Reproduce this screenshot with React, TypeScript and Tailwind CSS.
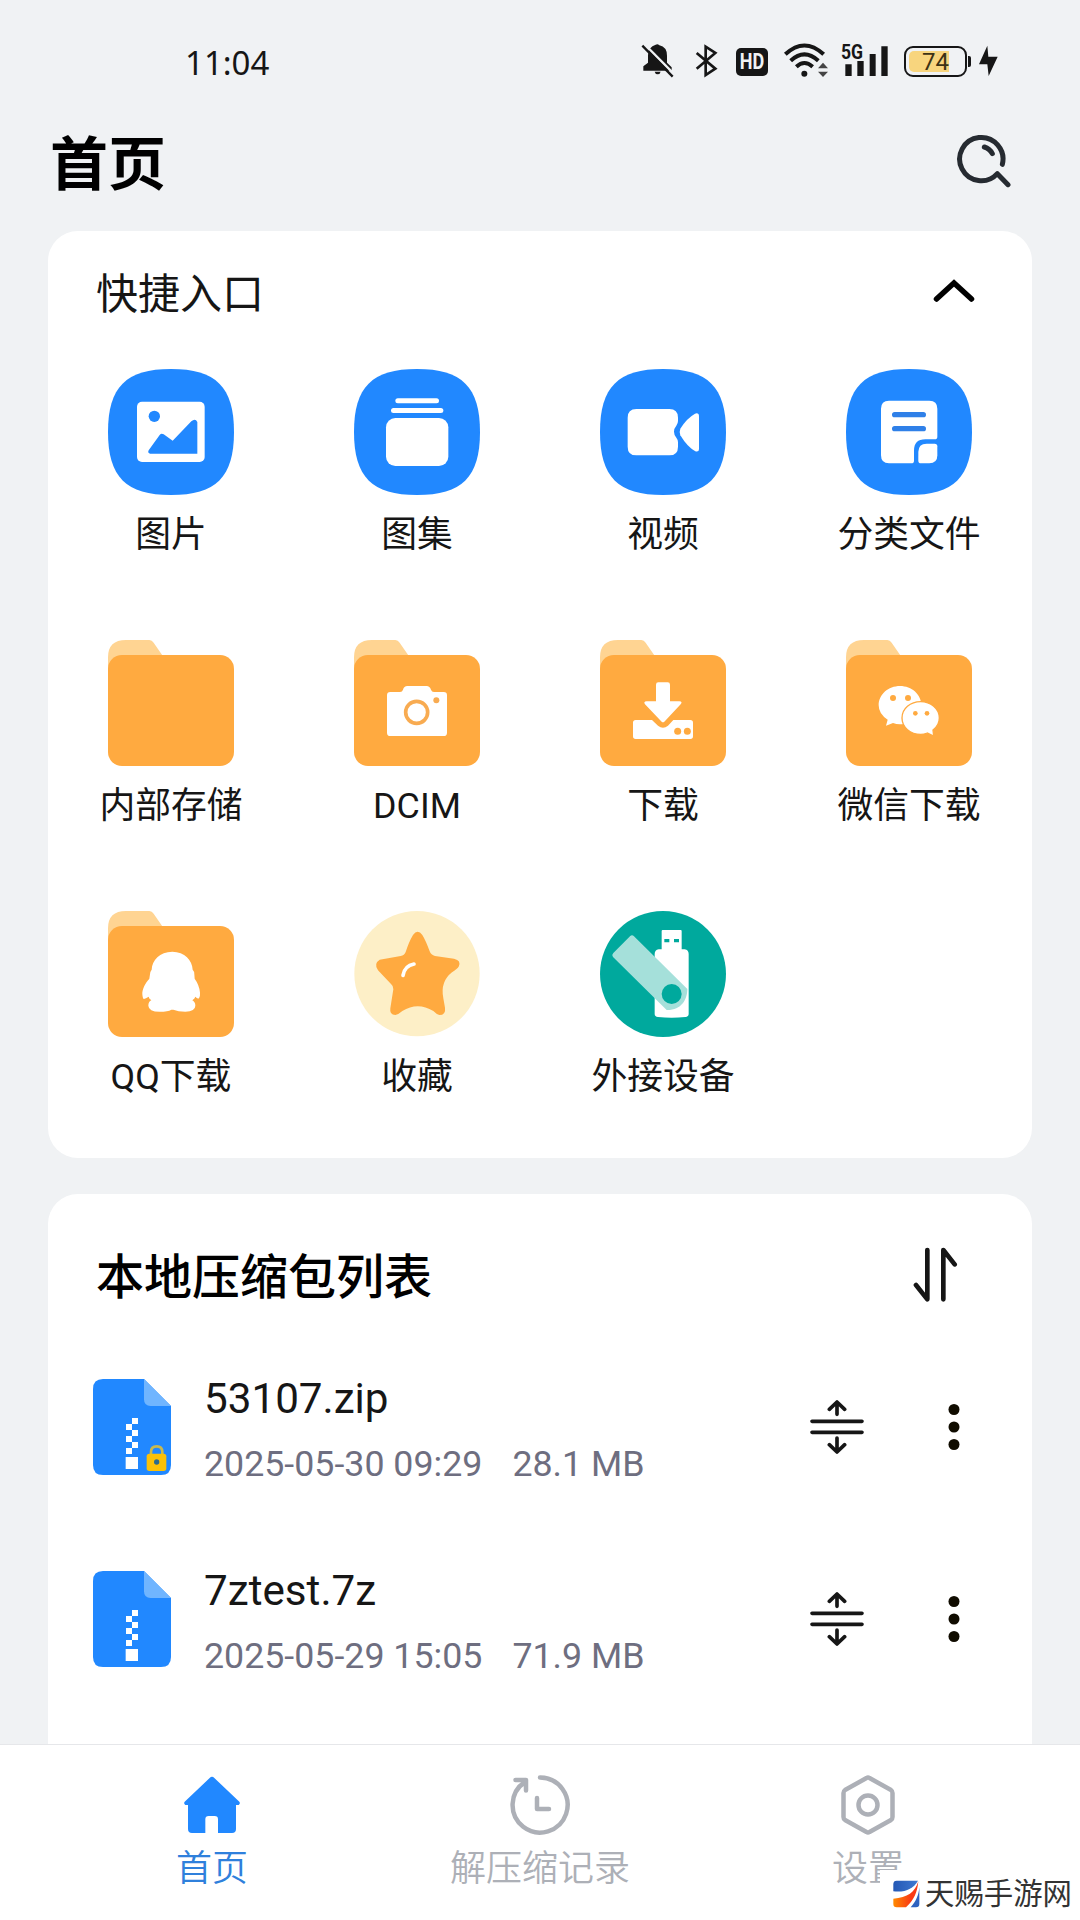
import type { ReactNode } from "react";

interface Shortcut {
  label: string;
  icon: ReactNode;
}

interface Archive {
  name: string;
  date: string;
  size: string;
  locked?: boolean;
}

function Squircle({ children }: { children: ReactNode }) {
  return (
    <svg viewBox="0 0 378 378" className="size-[126px]" fill="#fff">
      <path fill="#2188ff" d="M189 0C324 0 378 54 378 189S324 378 189 378 0 324 0 189 54 0 189 0Z" />
      {children}
    </svg>
  );
}

function Folder({ children }: { children?: ReactNode }) {
  return (
    <svg viewBox="0 0 378 378" className="size-[126px]" fill="#fff">
      <path fill="#ffd492" d="M0 100V52Q0 0 54 0H124Q132 0 137 8L166 50L120 100Z" />
      <rect y="45" width="378" height="333" rx="42" fill="#ffaa40" />
      {children}
    </svg>
  );
}

const shortcuts: Shortcut[] = [
  {
    label: "图片",
    icon: (
      <Squircle>
        <rect x="87" y="98" width="203" height="181" rx="15" />
        <circle cx="139" cy="142" r="17" fill="#2188ff" />
        <path fill="#2188ff" d="M122 244L155 198Q160 191 167 196L194 215L250 157Q262 147 268 159V254H126Q118 252 122 244Z" />
      </Squircle>
    ),
  },
  {
    label: "图集",
    icon: (
      <Squircle>
        <rect x="124" y="88" width="131" height="15" rx="7.5" />
        <rect x="111" y="117" width="157" height="15" rx="7.5" />
        <rect x="96" y="147" width="187" height="144" rx="28" />
      </Squircle>
    ),
  },
  {
    label: "视频",
    icon: (
      <Squircle>
        <path d="M109 120H208Q234 120 234 146V156Q234 163 229 170Q222 178 222 188Q222 198 229 206Q234 212 234 220V233Q234 259 208 259H109Q83 259 83 233V146Q83 120 109 120Z" />
        <path d="M297 143Q297 130 285 134Q260 148 241 179Q237 189 241 199Q262 234 286 247Q297 250 297 240Z" />
      </Squircle>
    ),
  },
  {
    label: "分类文件",
    icon: (
      <Squircle>
        <path d="M129 95H250Q274 95 274 119V203Q274 211 266 211H238Q204 211 204 245V275Q204 283 196 283H129Q105 283 105 259V119Q105 95 129 95Z" />
        <path d="M242 224H266Q274 224 274 232V259Q274 283 250 283H225Q217 283 217 275V249Q217 224 242 224Z" />
        <path stroke="#2f80e8" strokeWidth="16" strokeLinecap="round" d="M146 137H232M146 179H232" />
      </Squircle>
    ),
  },
  { label: "内部存储", icon: <Folder /> },
  {
    label: "DCIM",
    icon: (
      <Folder>
        <path d="M109 156H138Q145 156 147 149Q150 138 160 138H218Q227 138 231 149Q233 156 240 156H269Q279 156 279 166V278Q279 288 269 288H109Q99 288 99 278V166Q99 156 109 156Z" />
        <circle cx="188" cy="217" r="33" stroke="#f8ab51" strokeWidth="11" />
        <circle cx="247" cy="181" r="9" fill="#f8ab51" />
      </Folder>
    ),
  },
  {
    label: "下载",
    icon: (
      <Folder>
        <path d="M175 127H203Q210 127 210 134V184H238Q249 185 242 193L193 245Q189 249 185 245L135 193Q129 185 140 184H168V134Q168 127 175 127Z" />
        <path d="M107 240H156L174 257Q189 269 204 257L220 240H271Q279 240 279 248V289Q279 297 271 297H107Q99 297 99 289V248Q99 240 107 240Z" />
        <circle cx="233" cy="274" r="10.5" fill="#ffaa40" />
        <circle cx="262" cy="274" r="10.5" fill="#ffaa40" />
      </Folder>
    ),
  },
  {
    label: "微信下载",
    icon: (
      <Folder>
        <path d="M162 138C197 138 226 163 226 196S197 253 162 253Q151 253 141 249L120 257L125 239Q98 222 98 196C98 163 127 138 162 138Z" />
        <path stroke="#ffaa40" strokeWidth="4" d="M224 185C254 185 280 206 280 234Q280 256 261 270L263 288L244 279Q234 283 224 283C193 283 168 262 168 234S193 185 224 185Z" />
        <g fill="#ffaa40">
          <circle cx="141" cy="174" r="9" />
          <circle cx="186" cy="174" r="9" />
          <circle cx="208" cy="220" r="7" />
          <circle cx="243" cy="220" r="7" />
        </g>
      </Folder>
    ),
  },
  {
    label: "QQ下载",
    icon: (
      <Folder>
        <path d="M193 122C155 122 132 148 131 176Q125 184 126 190L124 203C112 215 102 236 103 250Q104 264 108 264Q113 263 122 257Q122 262 130 268Q121 272 121 284Q122 302 155 302Q180 302 190 296H196Q210 302 232 302Q262 300 262 284Q262 273 253 268Q261 262 262 257Q270 265 273 262Q277 255 276 245Q274 222 260 203L259 190Q260 182 254 176C253 148 230 122 193 122Z" />
      </Folder>
    ),
  },
  {
    label: "收藏",
    icon: (
      <svg viewBox="0 0 378 378" className="size-[126px]">
        <circle cx="189" cy="188" r="188" fill="#fdefc7" />
        <path fill="#ffaa40" d="M177 72Q191 53 205 72Q216 90 227 121Q231 132 243 135L300 143Q323 148 314 167Q309 174 294 184Q258 212 268 262L273 290Q276 312 256 312Q248 310 238 300Q191 272 145 300Q134 310 124 312Q106 312 109 292L118 235Q119 225 111 219L72 178Q58 158 77 146L140 135Q151 134 155 123Q165 92 177 72Z" />
        <path fill="none" stroke="#fff" strokeWidth="11" strokeLinecap="round" d="M147 193Q152 164 180 159" />
      </svg>
    ),
  },
  {
    label: "外接设备",
    icon: (
      <svg viewBox="0 0 378 378" className="size-[126px]" fill="#fff">
        <circle cx="189" cy="189" r="189" fill="#00a99d" />
        <path d="M188 57H242Q245 57 245 60V115H254Q266 117 266 129V309Q266 317 256 318Q215 323 174 318Q164 317 164 309V129Q164 117 176 115H185V60Q185 57 188 57Z" />
        <path fill="#00a99d" d="M193 84H208V94H193ZM222 84H237V94H222Z" />
        <path fill="#a5e0da" d="M90 76Q96 69 102 76L262 234C262 266 244 298 200 297L39 138Q34 132 40 126Z" />
        <circle cx="215" cy="249" r="30" fill="#00a99d" />
      </svg>
    ),
  },
];

const archives: Archive[] = [
  { name: "53107.zip", date: "2025-05-30 09:29", size: "28.1 MB", locked: true },
  { name: "7ztest.7z", date: "2025-05-29 15:05", size: "71.9 MB" },
];

function StatusBar() {
  return (
    <div className="flex h-[122px] items-start pr-[81px] pl-[185px] text-[#161616]">
      <span className="mt-[40px] font-['Noto_Sans',sans-serif] text-[33px] leading-[46px]">11:04</span>
      <div className="mt-[43px] ml-auto flex items-start">
        <svg viewBox="63 39 102 105" className="h-[35px] w-[34px]" fill="currentColor">
          <path d="M107 44Q113 40 118 46Q141 51 141 77V98L155 112V122H70V109L84 98V75Q85 51 107 44ZM104 125H122Q120 133 113 133T104 125Z" />
          <path stroke="#f0f2f4" strokeWidth="7" d="M73 42L164 134" />
          <path stroke="currentColor" strokeWidth="7" d="M67 47L158 140" />
        </svg>
        <svg viewBox="225 39 69 105" className="ml-[20px] h-[35px] w-[23px]" fill="none" stroke="currentColor" strokeWidth="8">
          <path d="M230 69L286 116L257 135V50L286 69L230 116" />
        </svg>
        <span className="mt-[5px] ml-[18px] flex h-[28px] w-[32px] items-center justify-center rounded-[5px] bg-[#161616] text-[22px] leading-[28px] font-bold text-[#f0f2f4]">
          <span className="scale-x-[0.82]">HD</span>
        </span>
        <svg viewBox="489 39 138 105" className="ml-[15px] h-[35px] w-[46px]" fill="none" stroke="currentColor" strokeWidth="12">
          <path d="M496 73Q553 20 611 73M512 92Q553 54 595 92M529 110Q553 88 578 110" />
          <circle cx="553" cy="131" r="9" fill="currentColor" stroke="none" />
          <path fill="#444" stroke="none" d="M609 98L624 115H594ZM609 141L594 125H624Z" />
        </svg>
        <div className="relative ml-[12px]">
          <svg viewBox="663 39 144 105" className="h-[35px] w-[48px]" fill="currentColor">
            <path d="M676 103H695V138H676ZM712 93H731V138H712ZM749 72H767V138H749ZM784 49H803V138H784Z" />
          </svg>
          <span className="absolute -top-[3px] left-0 origin-left scale-x-[0.88] text-[20px] leading-[24px] font-bold">5G</span>
        </div>
        <div className="mt-[3px] ml-[15px] flex items-center">
          <div className="relative flex h-[31px] w-[63px] items-center justify-center rounded-[9px] border-[2px] border-[#161616]">
            <div className="absolute top-[3px] left-[3px] h-[21px] w-[40px] rounded-l-[5px] bg-[#f8d57e]" />
            <span className="relative text-[24px] leading-[24px] text-[#3d3215]">74</span>
          </div>
          <div className="ml-px h-[11px] w-[3px] rounded-r-[2px] bg-[#161616]" />
        </div>
        <svg viewBox="1074 39 63 105" className="ml-[7px] h-[35px] w-[21px]" fill="currentColor">
          <path d="M1102 47L1077 103H1102L1106 138L1133 80H1105Z" />
        </svg>
      </div>
    </div>
  );
}

function ZipIcon({ locked }: { locked?: boolean }) {
  return (
    <svg viewBox="0 0 234 288" className="h-[96px] w-[78px]">
      <path fill="#2188ff" d="M30 0H153L234 81V258Q234 288 204 288H30Q0 288 0 258V30Q0 0 30 0Z" />
      <path fill="#70b5ff" d="M153 0L234 81H173Q153 81 153 61Z" />
      <path fill="#fff" d="M117 117h18v18h-18zM117 153h18v18h-18zM117 189h18v18h-18zM99 135h18v18h-18zM99 171h18v18h-18zM99 207h18v18h-18zM98 234h37v36h-37z" />
      {locked && (
        <>
          <path fill="none" stroke="#c9b94f" strokeWidth="8" d="M174 226V219Q174 202 191 202T208 219V226" />
          <rect x="161" y="224" width="59" height="52" rx="8" fill="#fcc107" />
          <circle cx="191" cy="249" r="8" fill="#2c6a8c" />
        </>
      )}
    </svg>
  );
}

function ArchiveRow({ name, date, size, locked }: Archive) {
  return (
    <div className="flex h-[192px] items-center pr-[72px] pl-[45px]">
      <ZipIcon locked={locked} />
      <div className="ml-[33px] flex flex-col pt-[9px]">
        <span className="text-[42.2px] leading-[60px] text-[#161616]">{name}</span>
        <span className="mt-[5px] flex gap-[30px] text-[35.75px] leading-[60px] text-[#6e6e80]">
          <span>{date}</span>
          <span>{size}</span>
        </span>
      </div>
      <svg viewBox="0 0 162 162" className="ml-auto size-[54px]" fill="none" stroke="#161616" strokeWidth="11" strokeLinecap="round" strokeLinejoin="round">
        <path d="M6 64H156M6 97H156M81 43V7M58 28L81 6L104 28M81 114V154M58 134L81 156L104 134" />
      </svg>
      <svg viewBox="0 0 12 48" className="ml-[84px] h-[48px] w-[12px]" fill="#100c00">
        <circle cx="6" cy="6.5" r="5.5" />
        <circle cx="6" cy="24" r="5.5" />
        <circle cx="6" cy="41.5" r="5.5" />
      </svg>
    </div>
  );
}

function BottomNav() {
  return (
    <nav className="grid h-[176px] shrink-0 grid-cols-3 border-t border-[#e6e7ea] bg-white px-[48px] text-center text-[36px] leading-[48px] font-[350] text-[#adb0b7]">
      <div className="flex flex-col items-center pt-[30px] text-[#2f80dc]">
        <svg viewBox="306 705 180 180" className="size-[60px]" fill="#2188ff">
          <path d="M389 714Q396 707 403 714L478 785Q482 790 476 795H468V867Q468 879 456 879H414V838Q414 828 404 828H386Q376 828 376 838V879H336Q324 879 324 867V795H316Q310 790 314 785Z" />
        </svg>
        <span className="mt-[10px]">首页</span>
      </div>
      <div className="flex flex-col items-center pt-[30px]">
        <svg viewBox="0 0 60 60" className="size-[60px]" fill="none" stroke="currentColor" strokeWidth="4.5" strokeLinecap="round" strokeLinejoin="round">
          <path d="M30 2.5A27.5 27.5 0 1 1 15 7M5.5 5H16V15.5" />
          <path d="M27 23V34H39" />
        </svg>
        <span className="mt-[10px]">解压缩记录</span>
      </div>
      <div className="flex flex-col items-center pt-[30px]">
        <svg viewBox="0 0 60 60" className="size-[60px]" fill="none" stroke="currentColor" strokeWidth="4.5" strokeLinejoin="round">
          <path d="M28.5 3Q30 2 31.5 3L53 15Q54.5 16 54.5 18V42Q54.5 44 53 45L31.5 57Q30 58 28.5 57L7 45Q5.5 44 5.5 42V18Q5.5 16 7 15Z" />
          <circle cx="30" cy="30" r="9.5" />
        </svg>
        <span className="mt-[10px]">设置</span>
      </div>
    </nav>
  );
}

// Site mark laid over the bottom right corner
function SiteMark() {
  return (
    <div className="absolute right-0 bottom-0 flex h-[50px] w-[200px] items-start bg-white pt-[6px] pl-[12px]">
      <svg viewBox="0 0 84 84" className="mt-[4px] size-[28px] shrink-0">
        <defs>
          <linearGradient id="markBlue" x2="1">
            <stop stopColor="#2458b5" />
            <stop offset="1" stopColor="#3f78d0" />
          </linearGradient>
          <linearGradient id="markRed" x2="1">
            <stop stopColor="#ff8a00" />
            <stop offset="0.7" stopColor="#f93a14" />
          </linearGradient>
        </defs>
        <path fill="url(#markBlue)" d="M14 2H78C64 26 40 38 4 34V12Q4 2 14 2Z" />
        <path fill="url(#markRed)" d="M79 4C70 36 46 54 4 56V72Q4 82 14 82H42C66 60 76 38 79 4Z" />
        <path fill="#2f63c0" d="M82 22V72Q82 82 72 82H56C72 64 80 46 82 22Z" />
      </svg>
      <span className="ml-[5px] text-[29.4px] leading-[36px] whitespace-nowrap text-[#333]">天赐手游网</span>
    </div>
  );
}

export default function App() {
  return (
    <div className="relative flex h-[1920px] w-[1080px] flex-col overflow-hidden bg-[#f0f2f4] font-[Roboto,'Noto_Sans_CJK_SC',sans-serif]">
      <StatusBar />

      <header className="flex h-[109px] items-start justify-between pr-[68px] pl-[50px]">
        <h1 className="mt-px text-[58px] leading-[84px] font-bold text-black">首页</h1>
        <svg viewBox="1008 312 168 162" className="mt-[12px] h-[54px] w-[56px]" fill="none" stroke="#262b31" strokeWidth="15" strokeLinecap="round" strokeLinejoin="round">
          <path d="M1147 403A65 65 0 1 0 1132 431L1164 464" />
          <path d="M1093 351Q1109 356 1117 371" />
        </svg>
      </header>

      <main className="flex h-[1513px] shrink-0 flex-col overflow-hidden px-[48px]">
        <section className="h-[927px] shrink-0 rounded-[30px] bg-white">
          <div className="flex h-[124px] items-center justify-between pr-[57px] pl-[48px]">
            <h2 className="mt-[4px] text-[42px] leading-[60px] text-[#161616]">快捷入口</h2>
            <svg viewBox="0 0 42 24" className="mb-[4px] h-[24px] w-[42px]" fill="none" stroke="#000" strokeWidth="5.5" strokeLinecap="round">
              <path d="M3.5 20L21 4L38.5 20" />
            </svg>
          </div>
          <div className="mt-[14px] grid grid-cols-4">
            {shortcuts.map((s) => (
              <div key={s.label} className="flex h-[271px] flex-col items-center">
                {s.icon}
                <span className="mt-[14px] text-[35.8px] leading-[52px] text-[#161616]">{s.label}</span>
              </div>
            ))}
          </div>
        </section>

        <section className="mt-[36px] h-[600px] shrink-0 rounded-t-[30px] bg-white">
          <div className="flex h-[137px] items-center justify-between pt-[26px] pr-[74px] pl-[48px]">
            <h2 className="mt-[4px] text-[48px] leading-[70px] font-medium text-black">本地压缩包列表</h2>
            <svg viewBox="399 81 135 168" className="mb-px h-[56px] w-[45px]" fill="none" stroke="#161616" strokeWidth="14" strokeLinecap="round" strokeLinejoin="round">
              <path d="M442 90V238L408 195M490 238V90L524 133" />
            </svg>
          </div>
          {archives.map((a) => (
            <ArchiveRow key={a.name} {...a} />
          ))}
        </section>
      </main>

      <BottomNav />
      <SiteMark />
    </div>
  );
}
